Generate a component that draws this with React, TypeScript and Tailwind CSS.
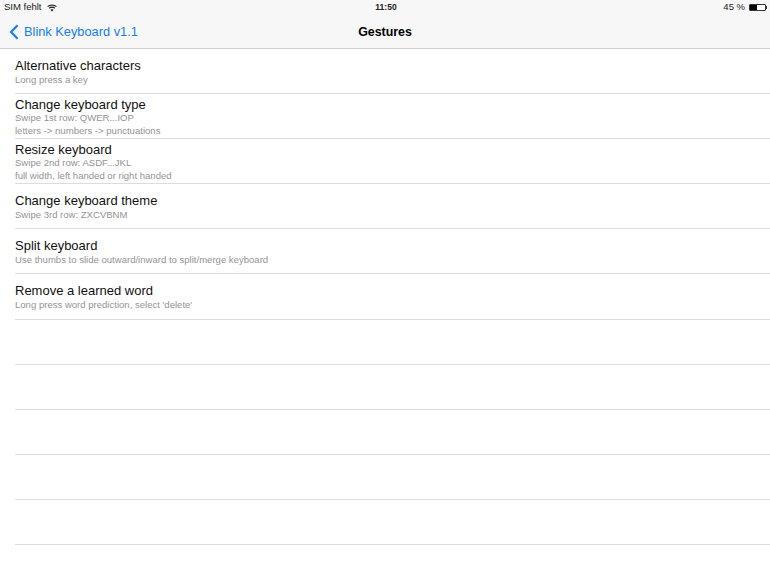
const rows = [
  { title: "Alternative characters", lines: ["Long press a key"] },
  { title: "Change keyboard type", lines: ["Swipe 1st row: QWER...IOP", "letters -> numbers -> punctuations"] },
  { title: "Resize keyboard", lines: ["Swipe 2nd row: ASDF...JKL", "full width, left handed or right handed"] },
  { title: "Change keyboard theme", lines: ["Swipe 3rd row: ZXCVBNM"] },
  { title: "Split keyboard", lines: ["Use thumbs to slide outward/inward to split/merge keyboard"] },
  { title: "Remove a learned word", lines: ["Long press word prediction, select 'delete'"] },
  { title: "", lines: [] },
  { title: "", lines: [] },
  { title: "", lines: [] },
  { title: "", lines: [] },
  { title: "", lines: [] },
  { title: "", lines: [] },
];

export default function App() {
  return (
    <div className="w-[770px] h-[578px] overflow-hidden bg-white font-['Liberation_Sans',sans-serif] text-black">
      {/* Status bar + nav */}
      <div className="h-[49px] bg-[#f7f7f7] border-b border-[#d0d0d0]">
        <div className="h-[15px] px-[4px] flex items-center justify-between text-[9.5px] text-[#222]">
          <div className="flex items-center gap-[5px] w-[120px]">
            <span>SIM fehlt</span>
            <svg width="10" height="8" viewBox="0 0 10 8" fill="none" stroke="#111" strokeWidth="1.1">
              <path d="M0.6 2.6 C3 0.4 7 0.4 9.4 2.6" />
              <path d="M2.2 4.2 C3.8 2.9 6.2 2.9 7.8 4.2" />
              <path d="M5 7.4 L3.6 5.8 C4.4 5.2 5.6 5.2 6.4 5.8 Z" fill="#111" stroke="none" />
            </svg>
          </div>
          <span className="font-bold text-[8.5px] ml-[1px]">11:50</span>
          <div className="flex items-center justify-end gap-[4px] w-[120px] mr-[-1px]">
            <span>45 %</span>
            <div className="flex items-center">
              <div className="w-[17px] h-[7px] border border-[#333] rounded-[1px] bg-white">
                <div className="w-[7px] h-full bg-black"></div>
              </div>
              <div className="w-[1px] h-[3px] bg-[#333]"></div>
            </div>
          </div>
        </div>
        <div className="relative h-[33px] flex items-center justify-center">
          <div className="absolute left-[9px] top-[7px] flex items-center gap-[5px] text-[#157efb] text-[12.8px]">
            <svg width="10" height="16" viewBox="0 0 10 16" fill="none" stroke="#157efb" strokeWidth="2.2">
              <path d="M8.6 1.2 L2 8 L8.6 14.8" />
            </svg>
            <span>Blink Keyboard v1.1</span>
          </div>
          <span className="font-bold text-[12.4px] mt-[1px]">Gestures</span>
        </div>
      </div>

      {/* List */}
      <div className="flex flex-col">
        {rows.map((row, i) => (
          <div key={i} className="h-[45.1px] pl-[15px]">
            <div className="h-full border-b border-[#dcdcdc] flex flex-col justify-center">
              {row.title && (
                <>
                  <span
                    className={
                      row.lines.length > 1
                        ? "text-[13px] leading-[15px] text-[#111] mt-[2px] mb-[-1px]"
                        : "text-[13px] leading-[15px] text-[#111] mt-[1px]"
                    }
                  >
                    {row.title}
                  </span>
                  {row.lines.map((line) => (
                    <span key={line} className="text-[9.55px] leading-[13px] text-[#949494]">
                      {line}
                    </span>
                  ))}
                </>
              )}
            </div>
          </div>
        ))}
      </div>
    </div>
  );
}
